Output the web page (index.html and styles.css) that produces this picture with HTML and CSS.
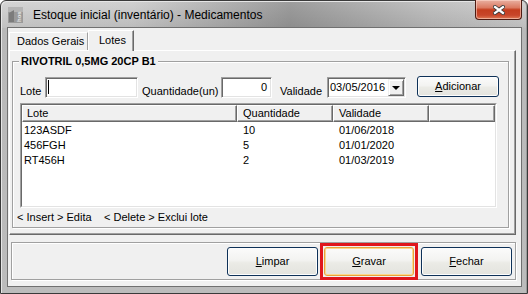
FILE: index.html
```html
<!DOCTYPE html>
<html>
<head>
<meta charset="utf-8">
<link rel="stylesheet" href="styles.css">
</head>
<body>
<div class="window">
  <div class="titlebar">
    <svg class="app-icon" width="15" height="16" viewBox="0 0 15 16">
      <rect x="0" y="0" width="15" height="16" fill="#9a9a9a"/>
      <rect x="0" y="0" width="15" height="5" fill="#b4b4b4"/>
      <path d="M1 6 L6 3 L6 15 L1 15 Z" fill="#7c7c7c"/>
      <text x="0" y="0" transform="translate(12.5 15) rotate(-90)" font-family="Liberation Sans, sans-serif" font-size="6" font-weight="bold" fill="#e6e6e6">hos</text>
    </svg>
    <span class="title">Estoque inicial (inventário) - Medicamentos</span>
    <div class="close">
      <svg width="12" height="10" viewBox="0 0 12 10">
        <path d="M2 2 L10 8 M10 2 L2 8" stroke="#3a3a3a" stroke-width="4" stroke-linecap="square"/>
        <path d="M2 2 L10 8 M10 2 L2 8" stroke="#ffffff" stroke-width="2.2" stroke-linecap="square"/>
      </svg>
    </div>
  </div>
  <div class="client">
    <div class="tabs">
      <div class="tab">Dados Gerais</div>
      <div class="tab active">Lotes</div>
    </div>
    <div class="panel">
      <div class="group">
        <span class="legend">RIVOTRIL 0,5MG 20CP B1</span>
        <div class="form-row">
          <span class="lbl lbl-lote">Lote</span>
          <div class="input input-lote"><span class="caret"></span></div>
          <span class="lbl lbl-qtd">Quantidade(un)</span>
          <div class="input input-qtd">0</div>
          <span class="lbl lbl-val">Validade</span>
          <div class="input date"><span class="date-text">03/05/2016</span><span class="drop"><span class="tri"></span></span></div>
          <button class="btn btn-add"><u>A</u>dicionar</button>
        </div>
        <div class="list">
          <div class="list-inner">
            <div class="list-head">
              <div class="hcell c1">Lote</div>
              <div class="hcell c2">Quantidade</div>
              <div class="hcell c3">Validade</div>
              <div class="hcell c4"></div>
            </div>
            <div class="list-row"><span class="cell c1">123ASDF</span><span class="cell c2">10</span><span class="cell c3">01/06/2018</span></div>
            <div class="list-row"><span class="cell c1">456FGH</span><span class="cell c2">5</span><span class="cell c3">01/01/2020</span></div>
            <div class="list-row"><span class="cell c1">RT456H</span><span class="cell c2">2</span><span class="cell c3">01/03/2019</span></div>
          </div>
        </div>
        <div class="hint"><span class="hint-a">&lt; Insert &gt; Edita</span><span>&lt; Delete &gt; Exclui lote</span></div>
      </div>
    </div>
    <div class="footer">
      <button class="btn btn-foot btn-limpar"><u>L</u>impar</button>
      <span class="focus-ring"><button class="btn btn-foot btn-gravar"><u>G</u>ravar</button></span>
      <button class="btn btn-foot btn-fechar"><u>F</u>echar</button>
    </div>
  </div>
</div>
</body>
</html>
```
FILE: styles.css
```css
html, body {
  margin: 0;
  padding: 0;
}
body {
  width: 528px;
  height: 294px;
  overflow: hidden;
  font-family: "Liberation Sans", Arial, sans-serif;
  font-size: 11px;
  color: #000;
  background: #ffffff;
}
.window {
  width: 528px;
  height: 294px;
  box-sizing: border-box;
  border: 1px solid #3a3a3a;
  border-radius: 6px 6px 0 0;
  background:
    linear-gradient(to right, rgba(255,255,255,0.12) 0, rgba(255,255,255,0.04) 25%, rgba(0,0,0,0.24) 55%, rgba(0,0,0,0.06) 82%, rgba(255,255,255,0.06) 100%) top / 100% 27px no-repeat,
    linear-gradient(to bottom, #cfcfcf 0, #b9b9b9 27px, #bcbcbc 100%);
  display: flex;
  flex-direction: column;
  box-shadow: inset 1px 1px 0 #e6e6e6, inset -1px 0 0 #9a9a9a;
}
.titlebar {
  height: 26px;
  display: flex;
  align-items: flex-start;
  padding-left: 7px;
  flex-shrink: 0;
}
.app-icon {
  margin-top: 6px;
  flex-shrink: 0;
}
.title {
  margin-left: 10px;
  margin-top: 6px;
  font-size: 12px;
  line-height: 16px;
  color: #000;
  white-space: nowrap;
}
.close {
  margin-left: auto;
  margin-right: 5px;
  margin-top: -1px;
  width: 47px;
  height: 20px;
  box-sizing: border-box;
  border: 1px solid #4e1b12;
  border-top: none;
  border-radius: 0 0 4px 4px;
  background: linear-gradient(to bottom, #e9b0a2 0, #db7a62 40%, #c43d1e 52%, #c8462a 80%, #df7a55 100%);
  box-shadow: inset 0 0 0 1px rgba(255,220,210,0.55);
  display: flex;
  align-items: center;
  justify-content: center;
  flex-shrink: 0;
}
.client {
  margin-left: 6px;
  width: 515px;
  height: 260px;
  box-sizing: border-box;
  border: 1px solid #707070;
  background: #f0f0f0;
  display: flex;
  flex-direction: column;
  flex-shrink: 0;
}
.tabs {
  height: 22px;
  display: flex;
  align-items: flex-end;
  padding-left: 1px;
  flex-shrink: 0;
}
.tab {
  box-sizing: border-box;
  height: 18px;
  width: 79px;
  border: 1px solid;
  border-color: #ffffff #a0a0a0 transparent #ffffff;
  border-bottom: none;
  padding-left: 7px;
  line-height: 17px;
  background: #f0f0f0;
  white-space: nowrap;
}
.tab.active {
  width: 46px;
  height: 21px;
  margin-bottom: -1px;
  padding-left: 10px;
  line-height: 19px;
  border-right: 1px solid #696969;
  box-shadow: inset -1px 0 0 #a0a0a0;
  position: relative;
  z-index: 1;
}
.panel {
  margin-left: 1px;
  width: 507px;
  height: 185px;
  box-sizing: border-box;
  border: 1px solid;
  border-color: #ffffff #696969 #696969 #ffffff;
  box-shadow: inset -1px -1px 0 #a0a0a0;
  padding: 10px 0 0 2px;
  flex-shrink: 0;
}
.group {
  position: relative;
  width: 497px;
  height: 167px;
  box-sizing: border-box;
  border: 1px solid #a0a0a0;
  box-shadow: inset 1px 1px 0 #ffffff, 1px 1px 0 #ffffff;
  padding-left: 7px;
}
.legend {
  position: absolute;
  left: 6px;
  top: -7px;
  padding: 0 2px;
  background: #f0f0f0;
  font-weight: bold;
  line-height: 13px;
  white-space: nowrap;
}
.form-row {
  margin-top: 15px;
  height: 21px;
  display: flex;
  align-items: flex-end;
}
.lbl {
  line-height: 13px;
  white-space: nowrap;
  flex-shrink: 0;
}
.lbl-lote { width: 25px; }
.lbl-qtd { width: 79px; margin-left: 4px; }
.lbl-val { width: 47px; margin-left: 8px; }
.input {
  box-sizing: border-box;
  height: 21px;
  background: #ffffff;
  border: 1px solid;
  border-color: #a0a0a0 #ffffff #ffffff #a0a0a0;
  box-shadow: inset 1px 1px 0 #696969, inset -1px -1px 0 #e3e3e3;
  flex-shrink: 0;
}
.input-lote {
  width: 93px;
  padding: 2px 0 0 2px;
}
.caret {
  display: block;
  width: 1px;
  height: 14px;
  background: #000;
}
.input-qtd {
  width: 51px;
  text-align: right;
  padding-right: 4px;
  line-height: 19px;
}
.date {
  width: 79px;
  display: flex;
  align-items: stretch;
}
.date-text {
  padding-left: 2px;
  line-height: 19px;
}
.drop {
  margin: 1px 1px 1px auto;
  width: 16px;
  box-sizing: border-box;
  border: 1px solid;
  border-color: #f0f0f0 #696969 #696969 #f0f0f0;
  box-shadow: inset 1px 1px 0 #ffffff, inset -1px -1px 0 #a0a0a0;
  background: #f0f0f0;
  display: flex;
  align-items: center;
  justify-content: center;
}
.tri {
  width: 0;
  height: 0;
  border-left: 4px solid transparent;
  border-right: 4px solid transparent;
  border-top: 4px solid #000;
}
.btn {
  box-sizing: border-box;
  font-family: "Liberation Sans", Arial, sans-serif;
  font-size: 11px;
  color: #000;
  padding: 0;
  border: 1px solid #0e3158;
  border-radius: 3px;
  background: linear-gradient(to bottom, #fbfbfb 0, #f3f3f1 45%, #ebebe6 55%, #e3e3de 100%);
  box-shadow: inset 0 0 0 1px #fdfdfd;
  flex-shrink: 0;
}
.btn u {
  text-decoration: underline;
}
.btn-add {
  margin-left: 11px;
  width: 82px;
  height: 21px;
  align-self: flex-end;
  margin-bottom: 1px;
  line-height: 17px;
}
.list {
  margin-top: 5px;
  width: 477px;
  height: 105px;
  box-sizing: border-box;
  border: 1px solid;
  border-color: #a0a0a0 #ffffff #ffffff #a0a0a0;
}
.list-inner {
  height: 100%;
  box-sizing: border-box;
  border: 1px solid;
  border-color: #696969 #e3e3e3 #e3e3e3 #696969;
  background: #ffffff;
}
.list-head {
  display: flex;
  height: 17px;
}
.hcell {
  box-sizing: border-box;
  height: 17px;
  border: 1px solid;
  border-color: #ffffff #696969 #696969 #ffffff;
  box-shadow: inset -1px -1px 0 #a0a0a0;
  background: #f0f0f0;
  line-height: 15px;
  padding-left: 4px;
  white-space: nowrap;
}
.hcell.c1 { width: 215px; }
.hcell.c2 { width: 96px; padding-left: 5px; }
.hcell.c3 { width: 96px; padding-left: 5px; }
.hcell.c4 { width: 66px; }
.list-row {
  display: flex;
  height: 15px;
  line-height: 15px;
}
.list-head + .list-row { margin-top: 1px; }
.cell { white-space: nowrap; box-sizing: border-box; }
.cell.c1 { width: 215px; padding-left: 2px; }
.cell.c2 { width: 96px; padding-left: 6px; }
.cell.c3 { width: 96px; padding-left: 6px; }
.hint {
  margin-top: 3px;
  margin-left: -3px;
  line-height: 13px;
  display: flex;
  white-space: nowrap;
}
.hint-a { width: 87px; }
.footer {
  margin-top: 7px;
  margin-left: 3px;
  width: 505px;
  height: 38px;
  box-sizing: border-box;
  border: 1px solid #a0a0a0;
  box-shadow: inset 1px 1px 0 #ffffff, 1px 1px 0 #ffffff;
  display: flex;
  align-items: center;
  justify-content: flex-end;
  padding-right: 3px;
  flex-shrink: 0;
}
.btn-foot {
  height: 29px;
  width: 91px;
  line-height: 25px;
}
.focus-ring {
  display: flex;
  margin-left: 2px;
  border: 3px solid #e0161c;
  padding: 1px;
}
.btn-gravar {
  width: 90px;
  border-color: #e9a23a;
  box-shadow: inset 0 0 0 1px #fcd88e;
}
.btn-fechar {
  margin-left: 3px;
}
```
